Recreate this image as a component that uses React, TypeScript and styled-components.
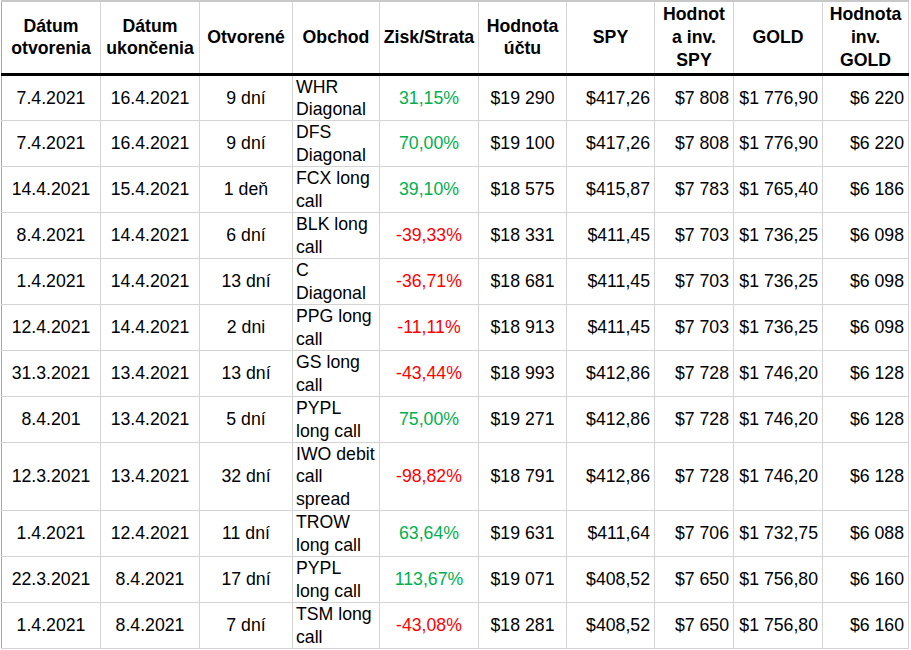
import styled, { createGlobalStyle } from 'styled-components';

const GlobalStyle = createGlobalStyle`
  html, body {
    margin: 0;
    padding: 0;
    background: #fff;
  }

  body {
    font-family: 'Liberation Sans', Arial, sans-serif;
    color: #000;
  }
`;

const Page = styled.div`
  padding-left: 1px;
  width: 910px;
  height: 650px;
  overflow: hidden;
`;

const Sheet = styled.table`
  border-collapse: collapse;
  table-layout: fixed;
  width: 908px;
  border-top: 2px solid #c8c8c8;
  font-size: 17.7px;
  line-height: 22.3px;
`;

const HeadRow = styled.tr`
  height: 73px;
  line-height: 22.7px;
`;

const BodyRow = styled.tr<{ $tall?: boolean }>`
  height: ${(p) => (p.$tall ? '68px' : '46px')};
`;

const HeadCell = styled.th`
  padding: 0;
  font-weight: 700;
  text-align: center;
  vertical-align: middle;
  border-left: 1px solid #d4d4d4;
  border-right: 1px solid #d4d4d4;
  border-bottom: 3px solid #000;
  white-space: nowrap;

  &:first-child {
    border-left-color: #a8a8a8;
  }
`;

type Align = 'left' | 'center' | 'right';
type Tone = 'gain' | 'loss';

const Cell = styled.td<{ $align: Align; $tone?: Tone; $wrap?: boolean }>`
  padding: ${(p) => (p.$align === 'left' ? '0 3px' : p.$align === 'right' ? '0 4px 0 0' : '0')};
  text-align: ${(p) => p.$align};
  vertical-align: middle;
  border: 1px solid #d4d4d4;
  white-space: ${(p) => (p.$wrap ? 'normal' : 'nowrap')};
  color: ${(p) => (p.$tone === 'gain' ? '#00b050' : p.$tone === 'loss' ? '#ff0000' : '#000')};

  &:first-child {
    border-left-color: #a8a8a8;
  }
`;

const widths = [99, 99, 93, 87, 99, 88, 88, 79, 89, 86];

const headers: string[][] = [
  ['Dátum', 'otvorenia'],
  ['Dátum', 'ukončenia'],
  ['Otvorené'],
  ['Obchod'],
  ['Zisk/Strata'],
  ['Hodnota', 'účtu'],
  ['SPY'],
  ['Hodnot', 'a inv.', 'SPY'],
  ['GOLD'],
  ['Hodnota', 'inv.', 'GOLD'],
];

type Trade = {
  opened: string;
  closed: string;
  days: string;
  trade: string;
  result: string;
  account: string;
  spy: string;
  spyValue: string;
  gold: string;
  goldValue: string;
};

const trades: Trade[] = [
  { opened: '7.4.2021', closed: '16.4.2021', days: '9 dní', trade: 'WHR Diagonal', result: '31,15%', account: '$19 290', spy: '$417,26', spyValue: '$7 808', gold: '$1 776,90', goldValue: '$6 220' },
  { opened: '7.4.2021', closed: '16.4.2021', days: '9 dní', trade: 'DFS Diagonal', result: '70,00%', account: '$19 100', spy: '$417,26', spyValue: '$7 808', gold: '$1 776,90', goldValue: '$6 220' },
  { opened: '14.4.2021', closed: '15.4.2021', days: '1 deň', trade: 'FCX long call', result: '39,10%', account: '$18 575', spy: '$415,87', spyValue: '$7 783', gold: '$1 765,40', goldValue: '$6 186' },
  { opened: '8.4.2021', closed: '14.4.2021', days: '6 dní', trade: 'BLK long call', result: '-39,33%', account: '$18 331', spy: '$411,45', spyValue: '$7 703', gold: '$1 736,25', goldValue: '$6 098' },
  { opened: '1.4.2021', closed: '14.4.2021', days: '13 dní', trade: 'C Diagonal', result: '-36,71%', account: '$18 681', spy: '$411,45', spyValue: '$7 703', gold: '$1 736,25', goldValue: '$6 098' },
  { opened: '12.4.2021', closed: '14.4.2021', days: '2 dni', trade: 'PPG long call', result: '-11,11%', account: '$18 913', spy: '$411,45', spyValue: '$7 703', gold: '$1 736,25', goldValue: '$6 098' },
  { opened: '31.3.2021', closed: '13.4.2021', days: '13 dní', trade: 'GS long call', result: '-43,44%', account: '$18 993', spy: '$412,86', spyValue: '$7 728', gold: '$1 746,20', goldValue: '$6 128' },
  { opened: '8.4.201', closed: '13.4.2021', days: '5 dní', trade: 'PYPL long call', result: '75,00%', account: '$19 271', spy: '$412,86', spyValue: '$7 728', gold: '$1 746,20', goldValue: '$6 128' },
  { opened: '12.3.2021', closed: '13.4.2021', days: '32 dní', trade: 'IWO debit call spread', result: '-98,82%', account: '$18 791', spy: '$412,86', spyValue: '$7 728', gold: '$1 746,20', goldValue: '$6 128' },
  { opened: '1.4.2021', closed: '12.4.2021', days: '11 dní', trade: 'TROW long call', result: '63,64%', account: '$19 631', spy: '$411,64', spyValue: '$7 706', gold: '$1 732,75', goldValue: '$6 088' },
  { opened: '22.3.2021', closed: '8.4.2021', days: '17 dní', trade: 'PYPL long call', result: '113,67%', account: '$19 071', spy: '$408,52', spyValue: '$7 650', gold: '$1 756,80', goldValue: '$6 160' },
  { opened: '1.4.2021', closed: '8.4.2021', days: '7 dní', trade: 'TSM long call', result: '-43,08%', account: '$18 281', spy: '$408,52', spyValue: '$7 650', gold: '$1 756,80', goldValue: '$6 160' },
];

function App() {
  return (
    <>
      <GlobalStyle />
      <Page>
        <Sheet>
          <colgroup>
            {widths.map((w, i) => (
              <col key={i} style={{ width: w }} />
            ))}
          </colgroup>
          <thead>
            <HeadRow>
              {headers.map((lines, i) => (
                <HeadCell key={i}>
                  {lines.map((line, j) => (
                    <div key={j}>{line}</div>
                  ))}
                </HeadCell>
              ))}
            </HeadRow>
          </thead>
          <tbody>
            {trades.map((t, i) => (
              <BodyRow key={i} $tall={t.trade.split(' ').length > 3}>
                <Cell $align="center">{t.opened}</Cell>
                <Cell $align="center">{t.closed}</Cell>
                <Cell $align="center">{t.days}</Cell>
                <Cell $align="left" $wrap>{t.trade}</Cell>
                <Cell $align="center" $tone={t.result.startsWith('-') ? 'loss' : 'gain'}>
                  {t.result}
                </Cell>
                <Cell $align="center">{t.account}</Cell>
                <Cell $align="right">{t.spy}</Cell>
                <Cell $align="right">{t.spyValue}</Cell>
                <Cell $align="right">{t.gold}</Cell>
                <Cell $align="right">{t.goldValue}</Cell>
              </BodyRow>
            ))}
          </tbody>
        </Sheet>
      </Page>
    </>
  );
}

export default App;
